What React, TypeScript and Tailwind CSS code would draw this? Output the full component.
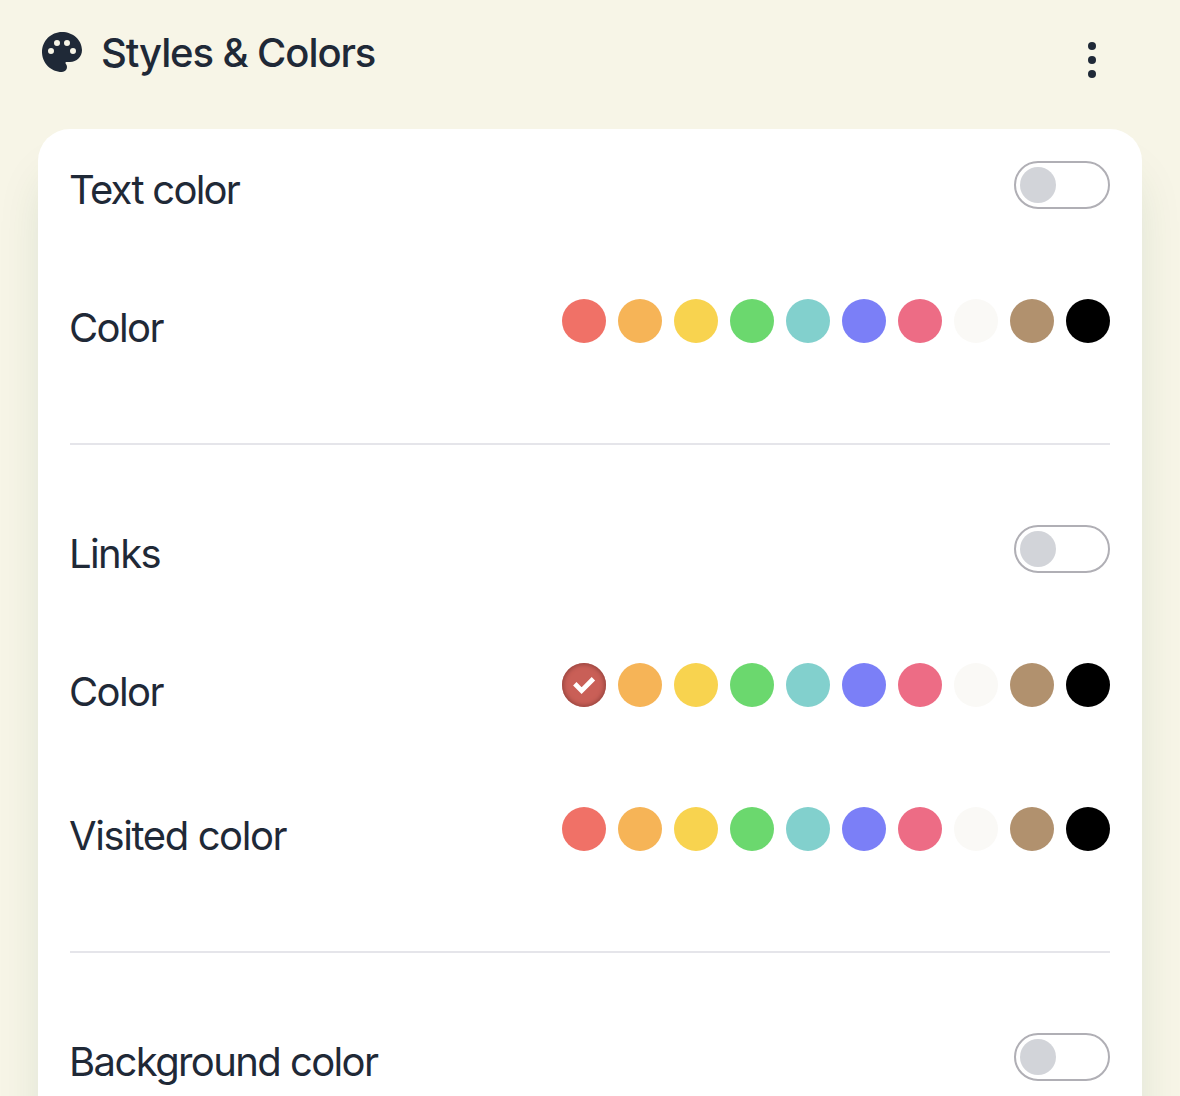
import React from "react";

const SWATCHES = [
  "bg-[#f07167]",
  "bg-[#f6b457]",
  "bg-[#f8d34f]",
  "bg-[#6bd86e]",
  "bg-[#82d0cd]",
  "bg-[#7b7ff7]",
  "bg-[#ed6c85]",
  "bg-[#faf9f6]",
  "bg-[#b1916e]",
  "bg-black",
];

type RowProps = { label: string; tracking?: string; selected?: number };

function Label({ children, tracking = "tracking-[-1.6px]" }: { children: React.ReactNode; tracking?: string }) {
  return <span className={`-ml-px pt-px text-[40px] leading-[56px] font-[430] ${tracking}`}>{children}</span>;
}

function ToggleRow({ label, tracking }: RowProps) {
  return (
    <div className="flex h-14 items-start justify-between">
      <Label tracking={tracking}>{label}</Label>
      <button
        role="switch"
        aria-checked={false}
        aria-label={label}
        className="flex h-12 w-24 items-center rounded-full border-2 border-[#b0afb5] px-1"
      >
        <span className="size-9 rounded-full bg-[#d2d4d9]" />
      </button>
    </div>
  );
}

function SwatchRow({ label, tracking, selected }: RowProps) {
  return (
    <div className="flex h-14 items-start justify-between">
      <Label tracking={tracking}>{label}</Label>
      <div className="flex gap-3">
        {SWATCHES.map((color, i) =>
          i === selected ? (
            <button
              key={color}
              aria-label="Selected"
              className="size-11 rounded-full bg-[#c95f57] shadow-[inset_0_0_4px_1.5px_#96443e]"
            >
              <svg viewBox="0 0 44 44" className="size-11" fill="none" stroke="#fff" strokeWidth="4.8">
                <path d="M12.800 20.800l6.800 6.800L31.400 15.800" />
              </svg>
            </button>
          ) : (
            <button key={color} aria-label="Color" className={`size-11 rounded-full ${color}`} />
          ),
        )}
      </div>
    </div>
  );
}

export default function App() {
  return (
    <div className="h-[1096px] overflow-hidden bg-[#f7f5e7] px-[38px] font-['Inter',sans-serif] text-[#1f2937]">
      <header className="flex h-[129px] items-start justify-between">
        <div className="flex items-start gap-[15px] pt-6">
          <svg viewBox="0 0 24 24" className="mt-1 size-12" fill="currentColor">
            <path d="M12 2C6.49 2 2 6.49 2 12s4.49 10 10 10a2.5 2.5 0 0 0 2.5-2.5c0-.61-.23-1.2-.64-1.67a.53.53 0 0 1-.13-.33c0-.28.22-.5.5-.5H16c3.31 0 6-2.69 6-6 0-4.96-4.49-9-10-9zM6.500 13a1.500 1.500 0 1 1 0-3 1.500 1.500 0 0 1 0 3zm3-4a1.500 1.500 0 1 1 0-3 1.500 1.500 0 0 1 0 3zm5 0a1.500 1.500 0 1 1 0-3 1.500 1.500 0 0 1 0 3zm3 4a1.500 1.500 0 1 1 0-3 1.500 1.500 0 0 1 0 3z" />
          </svg>
          <h1 className="pt-px text-[40px] leading-[56px] font-[520] tracking-[-1.1px]">Styles &amp; Colors</h1>
        </div>
        <button aria-label="More options" className="mt-[42px] mr-[46px] flex flex-col gap-1.5">
          <span className="size-2 rounded-full bg-current" />
          <span className="size-2 rounded-full bg-current" />
          <span className="size-2 rounded-full bg-current" />
        </button>
      </header>
      <main className="h-[1200px] rounded-[32px] bg-white p-8 shadow-[0_40px_50px_-10px_rgba(16,80,48,0.15)]">
        <section className="flex flex-col gap-[82px]">
          <ToggleRow label="Text color" tracking="tracking-[-1.750px]" />
          <SwatchRow label="Color" />
        </section>
        <hr className="mt-[88px] mb-20 border-t-2 border-[#e5e5ea]" />
        <section>
          <ToggleRow label="Links" />
          <div className="mt-[82px] flex flex-col gap-[88px]">
            <SwatchRow label="Color" selected={0} />
            <SwatchRow label="Visited color" tracking="tracking-[-1.4px]" />
          </div>
        </section>
        <hr className="mt-[88px] mb-20 border-t-2 border-[#e5e5ea]" />
        <ToggleRow label="Background color" />
      </main>
    </div>
  );
}
